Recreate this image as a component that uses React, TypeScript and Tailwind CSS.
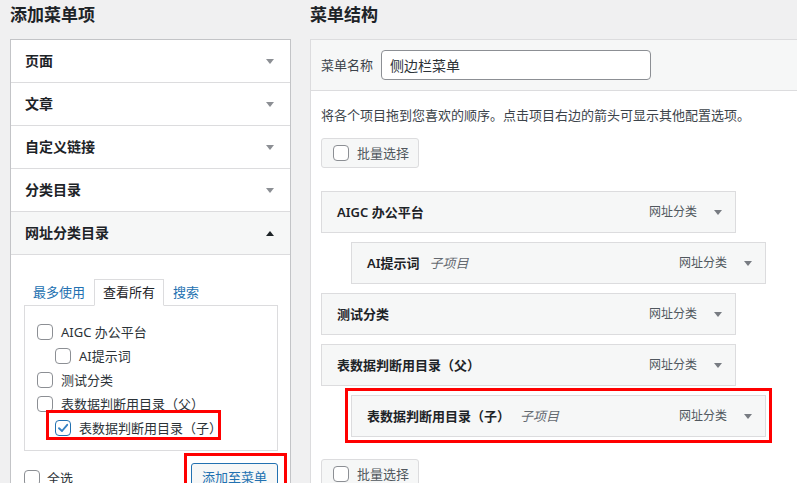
import type { ReactNode } from "react";

// Small down/up triangle used by the accordion rows and menu items
function Caret({ up = false, color = "#787c82" }: { up?: boolean; color?: string }) {
  return (
    <svg width="8" height="5" viewBox="0 0 8 5" className="shrink-0">
      <polygon points={up ? "0,5 8,5 4,0" : "0,0 8,0 4,5"} fill={color} />
    </svg>
  );
}

function Checkbox({ checked = false }: { checked?: boolean }) {
  return (
    <span
      className={`flex h-[16px] w-[16px] shrink-0 items-center justify-center rounded-[4px] border bg-white ${
        checked ? "border-[#2271b1]" : "border-[#8c8f94]"
      }`}
    >
      {checked && (
        <svg width="12" height="12" viewBox="0 0 12 12">
          <polyline points="2,6.2 5,9 10.2,2.8" fill="none" stroke="#3582c4" strokeWidth="1.9" strokeLinecap="round" strokeLinejoin="round" />
        </svg>
      )}
    </span>
  );
}

function Heading({ children }: { children: ReactNode }) {
  return (
    <div className="flex h-[39px] items-center pb-[10px] text-[17px] leading-[22px] font-semibold text-[#1d2327]">
      {children}
    </div>
  );
}

const sections = ["页面", "文章", "自定义链接", "分类目录"];

const terms = [
  { label: "AIGC 办公平台", child: false },
  { label: "AI提示词", child: true },
  { label: "测试分类", child: false },
  { label: "表数据判断用目录（父）", child: false },
];

function MenuItem({
  title,
  child = false,
  highlight = false,
}: {
  title: string;
  child?: boolean;
  highlight?: boolean;
}) {
  return (
    <div className={`relative ${child ? "ml-[30px]" : ""}`}>
      <div className="flex h-[42px] w-[415px] items-center border border-[#dcdcde] bg-[#f6f7f7] pl-[15px] pr-[13px]">
        <span className="text-[13px] leading-[18px] font-semibold text-[#1d2327]">{title}</span>
        {child && <span className="ml-[10px] text-[13px] leading-[18px] text-[#646970] italic">子项目</span>}
        <span className="ml-auto text-[12px] leading-[18px] text-[#50575e]">网址分类</span>
        <span className="ml-[17px]">
          <Caret />
        </span>
      </div>
      {highlight && (
        <span className="pointer-events-none absolute top-[-7px] left-[-6px] h-[55px] w-[427px] border-[3px] border-[#ff0000]" />
      )}
    </div>
  );
}

function BulkSelect() {
  return (
    <div className="flex h-[30px] w-[98px] items-center gap-[8px] rounded-[3px] border border-[#dcdcde] bg-[#f6f7f7] pl-[11px]">
      <Checkbox />
      <span className="text-[13px] leading-[18px] text-[#50575e]">批量选择</span>
    </div>
  );
}

export default function App() {
  return (
    <div className="flex h-[483px] w-[797px] overflow-hidden bg-[#f0f0f1] font-['Noto_Sans','Noto_Sans_CJK_SC',sans-serif]">
      {/* left column: add menu items */}
      <div className="ml-[10px] w-[281px] shrink-0">
        <Heading>添加菜单项</Heading>
        <div className="border border-[#c3c4c7] bg-white">
          {sections.map((s) => (
            <div
              key={s}
              className="flex h-[43px] items-center justify-between border-b border-[#dcdcde] pr-[16px] pl-[14px]"
            >
              <span className="text-[14px] leading-[20px] font-semibold text-[#1d2327]">{s}</span>
              <Caret color="#8c8f94" />
            </div>
          ))}
          <div className="flex h-[43px] items-center justify-between border-b border-[#dcdcde] bg-[#f6f7f7] pr-[16px] pl-[14px]">
            <span className="text-[14px] leading-[20px] font-semibold text-[#1d2327]">网址分类目录</span>
            <Caret up color="#1d2327" />
          </div>

          <div className="pt-[24px] pr-[12px] pb-[40px] pl-[13px]">
            <div className="flex text-[13px] leading-[18px]">
              <span className="border border-transparent px-[8px] py-[3px] text-[#2271b1]">最多使用</span>
              <span className="relative z-10 -mb-px border border-b-white border-[#dcdcde] bg-white px-[8px] py-[3px] text-[#1d2327]">
                查看所有
              </span>
              <span className="border border-transparent px-[8px] py-[3px] text-[#2271b1]">搜索</span>
            </div>
            <div className="h-[146px] border border-[#dcdcde] pt-[14px] pl-[12px]">
              {terms.map((t) => (
                <div
                  key={t.label}
                  className={`flex h-[24px] items-center gap-[8px] ${t.child ? "pl-[18px]" : ""}`}
                >
                  <Checkbox />
                  <span className="text-[13px] leading-[18px] text-[#2c3338]">{t.label}</span>
                </div>
              ))}
              <div className="relative ml-[18px] flex h-[24px] items-center gap-[8px]">
                <Checkbox checked />
                <span className="text-[13px] leading-[18px] text-[#2c3338]">表数据判断用目录（子）</span>
                <span className="pointer-events-none absolute top-[-6px] left-[-9px] h-[30px] w-[175px] border-[3px] border-[#ff0000]" />
              </div>
            </div>

            <div className="mt-[12px] flex items-center">
              <div className="flex items-center gap-[7px]">
                <Checkbox />
                <span className="text-[13px] leading-[18px] text-[#2c3338]">全选</span>
              </div>
              <div className="relative ml-auto mr-[0px]">
                <div className="flex h-[30px] w-[87px] items-center justify-center rounded-[3px] border border-[#2271b1] bg-[#f6f7f7] text-[13px] text-[#2271b1]">
                  添加至菜单
                </div>
                <span className="pointer-events-none absolute top-[-10px] left-[-7px] h-[45px] w-[103px] border-[3px] border-[#ff0000]" />
              </div>
            </div>
          </div>
        </div>
      </div>

      {/* right column: menu structure */}
      <div className="ml-[19px] w-[520px] shrink-0">
        <Heading>菜单结构</Heading>
        <div className="border-t border-l border-[#dcdcde] bg-white">
          <div className="flex h-[51px] items-center gap-[8px] border-b border-[#dcdcde] bg-[#f6f7f7] pl-[10px]">
            <span className="text-[13px] leading-[18px] text-[#3c434a]">菜单名称</span>
            <div className="flex h-[30px] w-[270px] items-center rounded-[4px] border border-[#8c8f94] bg-white pl-[8px] text-[14px] text-[#2c3338]">
              侧边栏菜单
            </div>
          </div>
          <div className="pt-[15px] pl-[10px] pb-[40px]">
            <p className="text-[13px] leading-[18px] text-[#3c434a]">
              将各个项目拖到您喜欢的顺序。点击项目右边的箭头可显示其他配置选项。
            </p>
            <div className="mt-[14px]">
              <BulkSelect />
            </div>
            <div className="mt-[23px] flex flex-col gap-[9px]">
              <MenuItem title="AIGC 办公平台" />
              <MenuItem title="AI提示词" child />
              <MenuItem title="测试分类" />
              <MenuItem title="表数据判断用目录（父）" />
              <MenuItem title="表数据判断用目录（子）" child highlight />
            </div>
            <div className="mt-[22px]">
              <BulkSelect />
            </div>
          </div>
        </div>
      </div>
    </div>
  );
}
